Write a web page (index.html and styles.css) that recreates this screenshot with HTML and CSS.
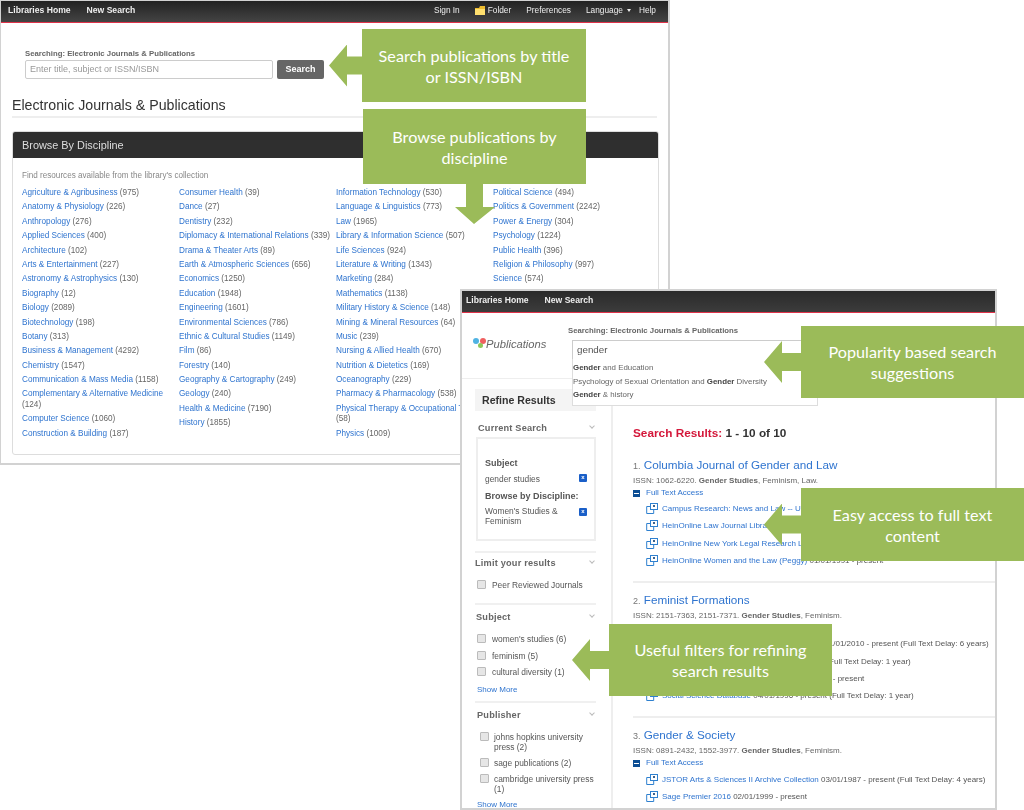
FILE: index.html
```html
<!DOCTYPE html>
<html lang="en">
<head>
  <meta charset="UTF-8">
  <meta name="viewport" content="width=device-width, initial-scale=1.0">
  <title>Electronic Journals &amp; Publications</title>
  <link rel="stylesheet" href="styles.css">
</head>
<body>
  <svg class="defs" width="0" height="0">
    <symbol id="ext" viewBox="0 0 12 11">
      <path d="M6 3.5H.7v7h7V7" fill="none" stroke="#2f80cf" stroke-width="1"/>
      <rect x="4.5" y=".5" width="7" height="6" fill="#fff" stroke="#2f80cf"/>
      <path d="M7 2l2 2M9 2L7 4" stroke="#27507f" stroke-width=".9"/>
    </symbol>
  </svg>

  <div class="canvas">
    <!-- browse page -->
    <div class="shot shot-browse">
      <div class="nav">
        <div class="nav-left"><a>Libraries Home</a><a>New Search</a></div>
        <div class="nav-right">
          <a>Sign In</a>
          <a class="folder"><svg width="11" height="9" viewBox="0 0 11 9"><path d="M0 2h4l1-2h5v9H0z" fill="#eebc2e"/><path d="M0 3h10v6H0z" fill="#ffdf6e"/></svg>Folder</a>
          <a>Preferences</a>
          <a class="lang">Language<span class="caret"></span></a>
          <a>Help</a>
        </div>
      </div>
      <div class="search-area">
        <div class="searching">Searching: Electronic Journals &amp; Publications</div>
        <div class="search-row">
          <div class="search-input">Enter title, subject or ISSN/ISBN</div>
          <div class="search-btn">Search</div>
        </div>
      </div>
      <h1 class="page-title">Electronic Journals &amp; Publications</h1>
      <div class="panel">
        <div class="panel-head">Browse By Discipline</div>
        <div class="panel-body">
          <p class="panel-note">Find resources available from the library's collection</p>
          <div class="disciplines">
            <ul>
              <li><a>Agriculture &amp; Agribusiness</a> (975)</li>
              <li><a>Anatomy &amp; Physiology</a> (226)</li>
              <li><a>Anthropology</a> (276)</li>
              <li><a>Applied Sciences</a> (400)</li>
              <li><a>Architecture</a> (102)</li>
              <li><a>Arts &amp; Entertainment</a> (227)</li>
              <li><a>Astronomy &amp; Astrophysics</a> (130)</li>
              <li><a>Biography</a> (12)</li>
              <li><a>Biology</a> (2089)</li>
              <li><a>Biotechnology</a> (198)</li>
              <li><a>Botany</a> (313)</li>
              <li><a>Business &amp; Management</a> (4292)</li>
              <li><a>Chemistry</a> (1547)</li>
              <li><a>Communication &amp; Mass Media</a> (1158)</li>
              <li><a>Complementary &amp; Alternative Medicine</a> (124)</li>
              <li><a>Computer Science</a> (1060)</li>
              <li><a>Construction &amp; Building</a> (187)</li>
            </ul>
            <ul>
              <li><a>Consumer Health</a> (39)</li>
              <li><a>Dance</a> (27)</li>
              <li><a>Dentistry</a> (232)</li>
              <li><a>Diplomacy &amp; International Relations</a> (339)</li>
              <li><a>Drama &amp; Theater Arts</a> (89)</li>
              <li><a>Earth &amp; Atmospheric Sciences</a> (656)</li>
              <li><a>Economics</a> (1250)</li>
              <li><a>Education</a> (1948)</li>
              <li><a>Engineering</a> (1601)</li>
              <li><a>Environmental Sciences</a> (786)</li>
              <li><a>Ethnic &amp; Cultural Studies</a> (1149)</li>
              <li><a>Film</a> (86)</li>
              <li><a>Forestry</a> (140)</li>
              <li><a>Geography &amp; Cartography</a> (249)</li>
              <li><a>Geology</a> (240)</li>
              <li><a>Health &amp; Medicine</a> (7190)</li>
              <li><a>History</a> (1855)</li>
            </ul>
            <ul>
              <li><a>Information Technology</a> (530)</li>
              <li><a>Language &amp; Linguistics</a> (773)</li>
              <li><a>Law</a> (1965)</li>
              <li><a>Library &amp; Information Science</a> (507)</li>
              <li><a>Life Sciences</a> (924)</li>
              <li><a>Literature &amp; Writing</a> (1343)</li>
              <li><a>Marketing</a> (284)</li>
              <li><a>Mathematics</a> (1138)</li>
              <li><a>Military History &amp; Science</a> (148)</li>
              <li><a>Mining &amp; Mineral Resources</a> (64)</li>
              <li><a>Music</a> (239)</li>
              <li><a>Nursing &amp; Allied Health</a> (670)</li>
              <li><a>Nutrition &amp; Dietetics</a> (169)</li>
              <li><a>Oceanography</a> (229)</li>
              <li><a>Pharmacy &amp; Pharmacology</a> (538)</li>
              <li><a>Physical Therapy &amp; Occupational Therapy</a> (58)</li>
              <li><a>Physics</a> (1009)</li>
            </ul>
            <ul>
              <li><a>Political Science</a> (494)</li>
              <li><a>Politics &amp; Government</a> (2242)</li>
              <li><a>Power &amp; Energy</a> (304)</li>
              <li><a>Psychology</a> (1224)</li>
              <li><a>Public Health</a> (396)</li>
              <li><a>Religion &amp; Philosophy</a> (997)</li>
              <li><a>Science</a> (574)</li>
            </ul>
          </div>
        </div>
      </div>
    </div>

    <!-- results page -->
    <div class="shot shot-results">
      <div class="nav nav-results">
        <div class="nav-left"><a>Libraries Home</a><a>New Search</a></div>
      </div>
      <div class="results-head">
        <div class="logo">
          <span class="dot dot-blue"></span><span class="dot dot-red"></span><span class="dot dot-green"></span>
          <span class="logo-text">Publications</span>
        </div>
        <div class="head-search">
          <div class="searching">Searching: Electronic Journals &amp; Publications</div>
          <div class="query">gender</div>
          <div class="suggest">
            <div><b>Gender</b> and Education</div>
            <div>Psychology of Sexual Orientation and <b>Gender</b> Diversity</div>
            <div><b>Gender</b> &amp; history</div>
          </div>
        </div>
      </div>
      <div class="results-body">
        <aside class="sidebar">
          <div class="refine">Refine Results</div>
          <div class="facet-title facet-current">Current Search<span class="chev"></span></div>
          <div class="current-box">
            <div class="current-label">Subject</div>
            <div class="current-row">gender studies<span class="remove">x</span></div>
            <div class="current-label current-label-2">Browse by Discipline:</div>
            <div class="current-row current-row-2">Women's Studies &amp; Feminism<span class="remove">x</span></div>
          </div>
          <div class="facet facet-limit">
            <div class="facet-title">Limit your results<span class="chev"></span></div>
            <label class="check"><span class="box"></span><span>Peer Reviewed Journals</span></label>
          </div>
          <div class="facet facet-subject">
            <div class="facet-title">Subject<span class="chev"></span></div>
            <label class="check"><span class="box"></span><span>women's studies (6)</span></label>
            <label class="check"><span class="box"></span><span>feminism (5)</span></label>
            <label class="check"><span class="box"></span><span>cultural diversity (1)</span></label>
            <a class="show-more">Show More</a>
          </div>
          <div class="facet facet-publisher">
            <div class="facet-title">Publisher<span class="chev"></span></div>
            <label class="check"><span class="box"></span><span>johns hopkins university press (2)</span></label>
            <label class="check"><span class="box"></span><span>sage publications (2)</span></label>
            <label class="check"><span class="box"></span><span>cambridge university press (1)</span></label>
            <a class="show-more">Show More</a>
          </div>
        </aside>
        <main class="results">
          <h2 class="results-count"><span>Search Results:</span> 1 - 10 of 10</h2>

          <article class="result">
            <div class="result-title"><span class="num">1.</span> <a>Columbia Journal of Gender and Law</a></div>
            <div class="issn">ISSN: 1062-6220. <b>Gender Studies</b>, Feminism, Law.</div>
            <div class="access"><span class="minus"></span><a>Full Text Access</a></div>
            <div class="source"><svg><use href="#ext"/></svg><span><a>Campus Research: News and Law -- US</a></span></div>
            <div class="source"><svg><use href="#ext"/></svg><span><a>HeinOnline Law Journal Library</a></span></div>
            <div class="source"><svg><use href="#ext"/></svg><span><a>HeinOnline New York Legal Research Library</a></span></div>
            <div class="source"><svg><use href="#ext"/></svg><span><a>HeinOnline Women and the Law (Peggy)</a> 01/01/1991 - present</span></div>
          </article>

          <article class="result">
            <div class="result-title"><span class="num">2.</span> <a>Feminist Formations</a></div>
            <div class="issn">ISSN: 2151-7363, 2151-7371. <b>Gender Studies</b>, Feminism.</div>
            <div class="access"><span class="minus"></span><a>Full Text Access</a></div>
            <div class="source"><svg><use href="#ext"/></svg><span><a>Humanities International Complete Collection</a> 01/01/2010 - present (Full Text Delay: 6 years)</span></div>
            <div class="source"><svg><use href="#ext"/></svg><span><a>OmniFile Full Text Mega</a> 04/01/1996 - present (Full Text Delay: 1 year)</span></div>
            <div class="source"><svg><use href="#ext"/></svg><span><a>Project MUSE Standard Collections</a> 01/01/2004 - present</span></div>
            <div class="source"><svg><use href="#ext"/></svg><span><a>Social Science Database</a> 04/01/1996 - present (Full Text Delay: 1 year)</span></div>
          </article>

          <article class="result">
            <div class="result-title"><span class="num">3.</span> <a>Gender &amp; Society</a></div>
            <div class="issn">ISSN: 0891-2432, 1552-3977. <b>Gender Studies</b>, Feminism.</div>
            <div class="access"><span class="minus"></span><a>Full Text Access</a></div>
            <div class="source"><svg><use href="#ext"/></svg><span><a>JSTOR Arts &amp; Sciences II Archive Collection</a> 03/01/1987 - present (Full Text Delay: 4 years)</span></div>
            <div class="source"><svg><use href="#ext"/></svg><span><a>Sage Premier 2016</a> 02/01/1999 - present</span></div>
          </article>
        </main>
      </div>
    </div>

    <!-- callouts -->
    <div class="callout callout-search">Search publications by title or ISSN/ISBN<span class="arrow arrow-short"></span></div>
    <div class="callout callout-browse">Browse publications by discipline<span class="arrow arrow-down"></span></div>
    <div class="callout callout-popular">Popularity based search suggestions<span class="arrow"></span></div>
    <div class="callout callout-access">Easy access to full text content<span class="arrow"></span></div>
    <div class="callout callout-filters">Useful filters for refining search results<span class="arrow"></span></div>
  </div>
</body>
</html>
```

FILE: styles.css
```css
* {
  box-sizing: border-box;
}

body {
  margin: 0;
  background: #fff;
  font-family: "Liberation Sans", Arial, sans-serif;
  color: #555;
}

a {
  color: #2f74cf;
}

.defs {
  position: absolute;
}

.canvas {
  position: relative;
  width: 1024px;
  height: 810px;
  overflow: hidden;
}

/* the two page screenshots */
.shot {
  position: absolute;
  background: #fff;
  border: 2px solid #d2d2d2;
  overflow: hidden;
  filter: blur(0.4px);
}

.shot-browse {
  left: -1px;
  top: 0;
  width: 671px;
  height: 465px;
  border-top-width: 1px;
}

.shot-results {
  left: 460px;
  top: 289px;
  width: 537px;
  height: 521px;
}

.nav {
  display: flex;
  justify-content: space-between;
  align-items: center;
  height: 22px;
  padding: 0 12px 3px 7px;
  background: linear-gradient(#222, #444);
  border-bottom: 1px solid #e0334a;
  font-size: 8.6px;
  color: #eee;
}

.nav a {
  color: #eee;
}

.nav-left {
  display: flex;
  gap: 16px;
  font-weight: bold;
}

.nav-right {
  display: flex;
  align-items: center;
  gap: 15px;
  font-size: 8.3px;
}

.folder {
  display: flex;
  align-items: center;
  gap: 2px;
}

.lang {
  display: flex;
  align-items: center;
  margin-right: -7px;
}

.caret {
  margin-left: 4px;
  border: 2px solid transparent;
  border-top: 3px solid #eee;
  border-bottom: 0;
}

.nav-results {
  background: linear-gradient(#2a2a2a, #3c3c3c);
  padding-left: 4px;
}

.search-area {
  padding: 25px 0 0 24px;
}

.searching {
  font-size: 7.75px;
  line-height: 12px;
  font-weight: bold;
  color: #666;
}

.search-row {
  display: flex;
  gap: 4px;
}

.search-input {
  width: 248px;
  height: 19px;
  padding-left: 4px;
  border: 1px solid #ccc;
  border-radius: 2px;
  font-size: 9px;
  line-height: 17px;
  color: #999;
}

.search-btn {
  width: 47px;
  height: 19px;
  background: #666;
  border-radius: 2px;
  color: #fff;
  font-size: 9px;
  font-weight: bold;
  line-height: 19px;
  text-align: center;
}

.page-title {
  margin: 19px 11px 0;
  width: 645px;
  height: 15px;
  padding-bottom: 3px;
  border-bottom: 2px solid #eee;
  font-size: 14.2px;
  font-weight: normal;
  line-height: 15px;
  color: #333;
  box-sizing: content-box;
}

.panel {
  margin: 13px 9px 0 11px;
  border: 1px solid #ddd;
  border-radius: 3px;
  height: 324px;
}

.panel-head {
  height: 26px;
  padding-left: 9px;
  background: #2f2f2f;
  border-radius: 2px 2px 0 0;
  color: #ddd;
  font-size: 10.9px;
  line-height: 27px;
}

.panel-body {
  padding: 12px 0 0 9px;
}

.panel-note {
  margin: 0 0 7px;
  font-size: 8.15px;
  line-height: 11px;
  color: #888;
}

.disciplines {
  display: grid;
  grid-template-columns: repeat(4, 157px);
  font-size: 8.2px;
  line-height: 10.6px;
  color: #666;
}

.disciplines ul {
  margin: 0;
  padding: 0 2px 0 0;
  list-style: none;
}

.disciplines li {
  margin-bottom: 3.8px;
}

/* results page header */
.results-head {
  position: relative;
  display: flex;
  height: 66px;
  border-bottom: 1px solid #eee;
}

.logo {
  position: relative;
  width: 106px;
  flex: none;
}

.logo-text {
  position: absolute;
  left: 24px;
  top: 25px;
  font-size: 11.2px;
  font-style: italic;
  color: #666;
}

.dot {
  position: absolute;
  width: 6px;
  height: 6px;
  border-radius: 50%;
}

.dot-blue {
  left: 11px;
  top: 25px;
  background: #4fb3e3;
}

.dot-red {
  left: 18px;
  top: 25px;
  background: #ef5f5f;
}

.dot-green {
  left: 16px;
  top: 30px;
  width: 5px;
  height: 5px;
  background: #8fc659;
}

.head-search {
  position: relative;
  padding-top: 12px;
}

.query {
  width: 246px;
  height: 20px;
  margin: 3px 0 0 4px;
  padding-left: 4px;
  border: 1px solid #ccc;
  font-size: 9.8px;
  line-height: 18px;
  color: #555;
}

/* dropdown hangs over the results below */
.suggest {
  position: absolute;
  left: 4px;
  top: 46px;
  z-index: 2;
  width: 246px;
  height: 47px;
  padding-top: 2px;
  background: #fff;
  border: 1px solid #ddd;
  border-top: 0;
  font-size: 7.9px;
  line-height: 13.6px;
  color: #666;
}

.suggest b {
  color: #444;
}

.results-body {
  display: flex;
}

.sidebar {
  flex: none;
  width: 151px;
  height: 440px;
  padding: 10px 15px 0 13px;
  border-right: 2px solid #eee;
  font-size: 8.4px;
  color: #555;
}

.refine {
  height: 22px;
  padding-left: 7px;
  background: #f4f4f4;
  font-size: 10.6px;
  font-weight: bold;
  line-height: 22px;
  color: #333;
}

.facet-title {
  display: flex;
  justify-content: space-between;
  align-items: center;
  height: 12px;
  padding-right: 2px;
  font-size: 9.2px;
  font-weight: bold;
  letter-spacing: 0.2px;
  color: #666;
}

.facet-current {
  margin: 11px 0 3px;
  padding-left: 3px;
}

.chev {
  width: 4px;
  height: 4px;
  margin-top: -4px;
  border-right: 1px solid #bbb;
  border-bottom: 1px solid #bbb;
  transform: rotate(45deg);
}

.current-box {
  height: 104px;
  margin-left: 1px;
  padding: 18px 7px 0 7px;
  border: 2px solid #eee;
}

.current-label {
  font-size: 9px;
  font-weight: bold;
  line-height: 12px;
  color: #555;
}

.current-label-2 {
  margin-top: 5px;
}

.current-row {
  display: flex;
  justify-content: space-between;
  margin-top: 4px;
  line-height: 12px;
  color: #555;
}

.current-row-2 {
  margin-top: 5px;
  line-height: 9.6px;
}

.remove {
  flex: none;
  width: 8px;
  height: 8px;
  margin-left: 20px;
  margin-top: 1px;
  background: #1a5fc8;
  border-radius: 1px;
  color: #fff;
  font-size: 6px;
  font-weight: bold;
  line-height: 7px;
  text-align: center;
}

.facet {
  margin-top: 10px;
  border-top: 2px solid #f0f0f0;
}

.facet-limit {
  padding-bottom: 13px;
}

.facet-limit .facet-title {
  margin-top: 4px;
}

.facet-limit .check {
  margin: 11px 0 0 2px;
}

.facet-subject {
  margin-top: 0;
  padding-bottom: 6px;
}

.facet-subject .facet-title {
  margin: 6px 0 11px 1px;
}

.facet-publisher {
  margin-top: 0;
}

.facet-publisher .facet-title {
  margin: 6px 0 11px 2px;
}

.check {
  display: flex;
  gap: 6px;
  margin: 0 0 6px 2px;
  line-height: 10.4px;
  color: #555;
}

.facet-publisher .check {
  gap: 5px;
  margin: 0 0 5.5px 5px;
}

.box {
  flex: none;
  width: 9px;
  height: 9px;
  background: #e6e6e6;
  border: 1px solid #bbb;
  border-radius: 1px;
}

.show-more {
  display: block;
  margin: 7px 0 0 2px;
  font-size: 8px;
  line-height: 10px;
}

.facet-publisher .show-more {
  margin-top: 5px;
}

.results {
  padding: 48px 0 0 20px;
  flex: 1;
  font-size: 8px;
}

.results-count {
  margin: 0 0 19px;
  font-size: 11.8px;
  line-height: 12px;
  color: #333;
}

.results-count span {
  color: #d4173a;
}

.result {
  padding-bottom: 12px;
  border-bottom: 2px solid #eee;
  margin-bottom: 10px;
}

.result-title {
  font-size: 11.7px;
  line-height: 14px;
}

.num {
  font-size: 9px;
  color: #777;
}

.issn {
  margin-top: 2px;
  line-height: 12px;
  color: #666;
}

.access {
  display: flex;
  align-items: center;
  gap: 6px;
  line-height: 12px;
  margin-bottom: 1px;
}

.minus {
  position: relative;
  width: 7px;
  height: 7px;
  background: #0d4e94;
}

.minus::after {
  content: "";
  position: absolute;
  left: 1px;
  right: 1px;
  top: 3px;
  height: 1px;
  background: #fff;
}

.source {
  display: flex;
  align-items: center;
  gap: 4px;
  height: 17.3px;
  padding-left: 13px;
  white-space: nowrap;
}

.source svg {
  flex: none;
  width: 12px;
  height: 11px;
}

/* green annotation boxes */
.callout {
  position: absolute;
  z-index: 5;
  display: flex;
  align-items: center;
  justify-content: center;
  padding: 0 15px;
  background: #9bbb59;
  color: #fff;
  font-family: Lato, "Open Sans", sans-serif;
  font-size: 16.2px;
  line-height: 21px;
  text-align: center;
}

.arrow {
  position: absolute;
  right: 100%;
  top: 50%;
  width: 37px;
  height: 42px;
  margin-top: -21px;
  background: #9bbb59;
  clip-path: polygon(0 50%, 18px 0, 18px 12px, 100% 12px, 100% 30px, 18px 30px, 18px 100%);
}

.arrow-short {
  width: 33px;
}

.arrow-down {
  right: auto;
  left: 92px;
  top: 100%;
  width: 40px;
  height: 40px;
  margin-top: 0;
  clip-path: polygon(11px 0, 28px 0, 28px 23px, 100% 23px, 19px 100%, 0 23px, 11px 23px);
}

.callout-search {
  left: 362px;
  top: 29px;
  width: 224px;
  height: 73px;
}

.callout-browse {
  left: 363px;
  top: 109px;
  width: 223px;
  height: 75px;
}

.callout-popular {
  left: 801px;
  top: 326px;
  width: 223px;
  height: 72px;
}

.callout-access {
  left: 801px;
  top: 488px;
  width: 223px;
  height: 73px;
}

.callout-filters {
  left: 609px;
  top: 624px;
  width: 223px;
  height: 72px;
}
```
